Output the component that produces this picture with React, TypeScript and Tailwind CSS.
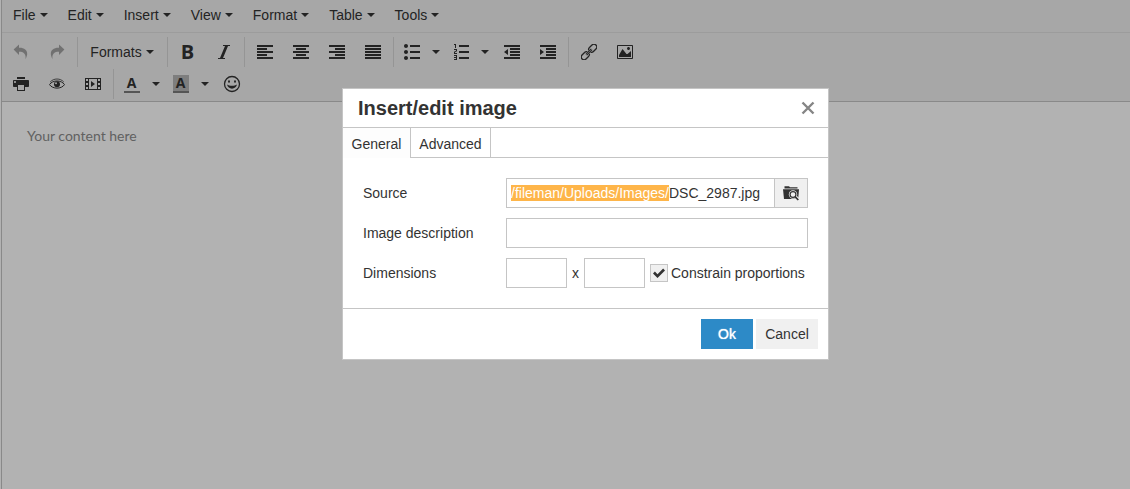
import { useEffect, useRef } from "react";
import type { ReactNode } from "react";
import {
  ImCheckmark,
  ImFilm,
  ImImage,
  ImIndentDecrease,
  ImIndentIncrease,
  ImItalic,
  ImList2,
  ImListNumbered,
  ImParagraphCenter,
  ImParagraphJustify,
  ImParagraphLeft,
  ImParagraphRight,
  ImPrinter,
} from "react-icons/im";

const menus = ["File", "Edit", "Insert", "View", "Format", "Table", "Tools"];

const fieldClass = "h-[30px] border border-[#c5c5c5] bg-white px-1 outline-none";

function Caret() {
  return (
    <svg className="h-1 w-2 shrink-0" viewBox="0 0 8 4" fill="currentColor">
      <path d="M0 0h8L4 4z" />
    </svg>
  );
}

function UndoIcon({ className = "" }: { className?: string }) {
  return (
    <svg className={`h-4 w-4 ${className}`} viewBox="0 0 16 16" fill="currentColor">
      <path d="M.6 5.6L6 .4v3.3c7.400-.3 10.400 5 6.400 11.500.900-5-1.400-7.600-6.400-7.500v3.300z" />
    </svg>
  );
}

function EyeIcon() {
  return (
    <svg className="h-4 w-4" viewBox="0 0 16 16" fill="none" stroke="currentColor">
      <path d="M.5 8.600C3.500 3.800 12.500 3.800 15.500 8.600 12.500 13.300 3.500 13.300.5 8.600z" />
      <path d="M1.200 6C4.500 2 11.500 2 14.800 6" strokeWidth=".8" />
      <circle cx="8" cy="8.200" r="3" fill="currentColor" stroke="none" />
      <circle cx="7" cy="7.200" r="1" fill="#f0f0f0" stroke="none" />
    </svg>
  );
}

function LinkIcon() {
  return (
    <svg
      className="h-4 w-4"
      viewBox="0 0 16 16"
      fill="none"
      stroke="currentColor"
      strokeWidth="1.300"
      strokeLinecap="round"
    >
      <g transform="rotate(-45 8 8)">
        <path d="M6.800 6.200A2.700 2.700 0 0 0 4.500 5.200H1A2.800 2.800 0 0 0 1 10.800H4.500A2.700 2.700 0 0 0 6.800 9.800" />
        <path d="M9.200 6.200A2.700 2.700 0 0 1 11.500 5.200H15A2.800 2.800 0 0 1 15 10.800H11.500A2.700 2.700 0 0 1 9.200 9.800" />
        <path d="M4.500 7.300H11.500M4.500 8.700H11.500" strokeWidth="1" />
      </g>
    </svg>
  );
}

function SmileIcon() {
  return (
    <svg className="h-4 w-4 overflow-visible" viewBox="0 0 16 16">
      <circle
        cx="8"
        cy="8"
        r="7.500"
        fill="none"
        stroke="currentColor"
        strokeWidth="1.300"
      />
      <ellipse cx="5" cy="5.500" rx="1" ry="1.300" fill="currentColor" />
      <ellipse cx="11" cy="5.500" rx="1" ry="1.300" fill="currentColor" />
      <path
        d="M3 8.500C5.500 10.300 10.500 10.300 13 8.500 12 14 4 14 3 8.500z"
        fill="currentColor"
      />
    </svg>
  );
}

function BrowseIcon() {
  return (
    <svg className="h-4 w-4" viewBox="0 0 16 16">
      <path d="M1.500 3.500V1.300H6l1 1h7.500v1.200z" fill="#333" />
      <path d="M0 4.200h16L15.200 14H1z" fill="#333" />
      <circle cx="10" cy="9.500" r="4.200" fill="#f0f0f0" />
      <path d="M12 11.500l3.500 3.500" stroke="#f0f0f0" strokeWidth="3.600" />
      <circle cx="10" cy="9.500" r="2.900" fill="none" stroke="#333" strokeWidth="1.200" />
      <path d="M12 11.600l3.300 3.400" stroke="#333" strokeWidth="1.700" />
    </svg>
  );
}

function Separator() {
  return <div className="ml-0.5 mr-px h-[30px] w-px bg-[#d6d6d6]" />;
}

function ToolButton({
  label,
  disabled,
  children,
}: {
  label: string;
  disabled?: boolean;
  children: ReactNode;
}) {
  return (
    <button
      type="button"
      aria-label={label}
      disabled={disabled}
      className="flex h-[30px] w-[35px] items-center justify-center text-base disabled:opacity-40"
    >
      {children}
    </button>
  );
}

function SplitButton({
  label,
  children,
}: {
  label: string;
  children: ReactNode;
}) {
  return (
    <div className="flex h-[30px]">
      <button
        type="button"
        aria-label={label}
        className="flex w-[31px] items-center justify-center text-base"
      >
        {children}
      </button>
      <button
        type="button"
        aria-label={`${label} options`}
        className="flex w-[17px] items-center justify-center"
      >
        <Caret />
      </button>
    </div>
  );
}

function Toolbar() {
  return (
    <div className="flex flex-col gap-0.5 border-b border-[#c5c5c5] pt-1 pb-0.5 pl-px">
      <div className="flex gap-px">
        <ToolButton label="Undo" disabled>
          <UndoIcon />
        </ToolButton>
        <ToolButton label="Redo" disabled>
          <UndoIcon className="-scale-x-100" />
        </ToolButton>
        <Separator />
        <button
          type="button"
          className="flex h-[30px] w-[84px] items-center justify-center gap-1"
        >
          Formats
          <Caret />
        </button>
        <Separator />
        <ToolButton label="Bold">
          <span className="font-['Open_Sans'] text-xl font-bold">B</span>
        </ToolButton>
        <ToolButton label="Italic">
          <ImItalic />
        </ToolButton>
        <Separator />
        <ToolButton label="Align left">
          <ImParagraphLeft />
        </ToolButton>
        <ToolButton label="Align center">
          <ImParagraphCenter />
        </ToolButton>
        <ToolButton label="Align right">
          <ImParagraphRight />
        </ToolButton>
        <ToolButton label="Justify">
          <ImParagraphJustify />
        </ToolButton>
        <Separator />
        <SplitButton label="Bullet list">
          <ImList2 />
        </SplitButton>
        <SplitButton label="Numbered list">
          <ImListNumbered />
        </SplitButton>
        <ToolButton label="Decrease indent">
          <ImIndentDecrease />
        </ToolButton>
        <ToolButton label="Increase indent">
          <ImIndentIncrease />
        </ToolButton>
        <Separator />
        <ToolButton label="Insert/edit link">
          <LinkIcon />
        </ToolButton>
        <ToolButton label="Insert/edit image">
          <ImImage />
        </ToolButton>
      </div>
      <div className="flex gap-px">
        <ToolButton label="Print">
          <ImPrinter />
        </ToolButton>
        <ToolButton label="Preview">
          <EyeIcon />
        </ToolButton>
        <ToolButton label="Insert/edit video">
          <ImFilm />
        </ToolButton>
        <Separator />
        <SplitButton label="Text color">
          <span className="flex h-[18px] w-4 items-center justify-center border-b-2 border-[#7a7a7a] font-['Open_Sans'] text-sm font-bold">
            A
          </span>
        </SplitButton>
        <SplitButton label="Background color">
          <span className="flex h-[18px] w-4 items-center justify-center border-b-2 border-[#7a7a7a] bg-[#b5b5b5] font-['Open_Sans'] text-sm font-bold">
            A
          </span>
        </SplitButton>
        <ToolButton label="Emoticons">
          <SmileIcon />
        </ToolButton>
      </div>
    </div>
  );
}

function ImageDialog() {
  const sourceRef = useRef<HTMLInputElement>(null);

  // Highlight the folder part so that only the file name stays plain
  useEffect(() => {
    const input = sourceRef.current;
    if (!input) return;
    input.focus();
    input.setSelectionRange(0, input.value.lastIndexOf("/") + 1);
  }, []);

  return (
    <div
      role="dialog"
      aria-labelledby="dialog-title"
      className="w-[487px] border border-[#c5c5c5] bg-white"
    >
      <div className="flex h-[39px] items-center justify-between border-b border-[#c5c5c5] pr-3 pl-[15px]">
        <h2 id="dialog-title" className="text-xl font-bold">
          Insert/edit image
        </h2>
        <button type="button" aria-label="Close">
          <svg className="h-4 w-4" viewBox="0 0 16 16">
            <path
              d="M2.500 2.500l11 11M13.500 2.500l-11 11"
              stroke="#858585"
              strokeWidth="2.400"
            />
          </svg>
        </button>
      </div>

      <div role="tablist" className="flex h-[30px]">
        <button
          type="button"
          role="tab"
          aria-selected="true"
          className="w-[68px] border-r border-[#c5c5c5] bg-[#fdfdfd] pt-0.5"
        >
          General
        </button>
        <button
          type="button"
          role="tab"
          aria-selected="false"
          className="w-20 border-r border-b border-[#c5c5c5] pt-0.5"
        >
          Advanced
        </button>
        <div className="flex-1 border-b border-[#c5c5c5]" />
      </div>

      <form className="flex flex-col gap-2.5 p-5">
        <div className="flex items-center">
          <label htmlFor="source" className="w-[143px] shrink-0">
            Source
          </label>
          <input
            id="source"
            ref={sourceRef}
            type="text"
            defaultValue="/fileman/Uploads/Images/DSC_2987.jpg"
            className={`${fieldClass} min-w-0 flex-1 border-r-0 selection:bg-[#feb549] selection:text-white`}
          />
          <button
            type="button"
            aria-label="Browse"
            className="flex h-[30px] w-[34px] items-center justify-center border border-[#c5c5c5] bg-[#f0f0f0]"
          >
            <BrowseIcon />
          </button>
        </div>
        <div className="flex items-center">
          <label htmlFor="description" className="w-[143px] shrink-0">
            Image description
          </label>
          <input
            id="description"
            type="text"
            className={`${fieldClass} min-w-0 flex-1`}
          />
        </div>
        <div className="flex items-center">
          <label htmlFor="width" className="w-[143px] shrink-0">
            Dimensions
          </label>
          <div className="flex items-center gap-[5px]">
            <input id="width" type="text" className={`${fieldClass} w-[61px]`} />
            <span>x</span>
            <input
              type="text"
              aria-label="Height"
              className={`${fieldClass} w-[61px]`}
            />
            <label className="flex items-center gap-[3px] whitespace-nowrap">
              <span className="relative flex">
                <input
                  type="checkbox"
                  defaultChecked
                  className="peer h-[18px] w-[18px] appearance-none border border-[#c5c5c5] bg-[#f0f0f0]"
                />
                <ImCheckmark className="pointer-events-none absolute inset-[3px] hidden h-3 w-3 peer-checked:block" />
              </span>
              Constrain proportions
            </label>
          </div>
        </div>
      </form>

      <div className="flex justify-end gap-[3px] border-t border-[#c5c5c5] p-2.5">
        <button
          type="button"
          className="h-[30px] w-[52px] bg-[#2d8ac7] text-white [text-shadow:0_0_1px_white]"
        >
          Ok
        </button>
        <button type="button" className="h-[30px] w-[62px] bg-[#f0f0f0]">
          Cancel
        </button>
      </div>
    </div>
  );
}

export default function App() {
  return (
    <div className="min-h-screen bg-white pl-px font-['Liberation_Sans',Arial,sans-serif] text-sm text-[#333]">
      <div className="flex min-h-screen flex-col border-l border-[#c5c5c5]">
        <div className="bg-[#f0f0f0]">
          <div className="flex border-b border-[#e0e0e0] pb-0.5 pl-px">
            {menus.map((menu) => (
              <button
                key={menu}
                type="button"
                className="flex h-[30px] items-center gap-1 px-2.5"
              >
                {menu}
                <Caret />
              </button>
            ))}
          </div>
          <Toolbar />
        </div>
        <div className="flex-1 p-6 pl-[25px] font-[Lato,sans-serif] text-[#8c8c8c]">
          <p>Your content here</p>
        </div>
      </div>

      <div className="fixed inset-0 flex items-start justify-center bg-black/30 pt-[88px] pl-[41px]">
        <ImageDialog />
      </div>
    </div>
  );
}
